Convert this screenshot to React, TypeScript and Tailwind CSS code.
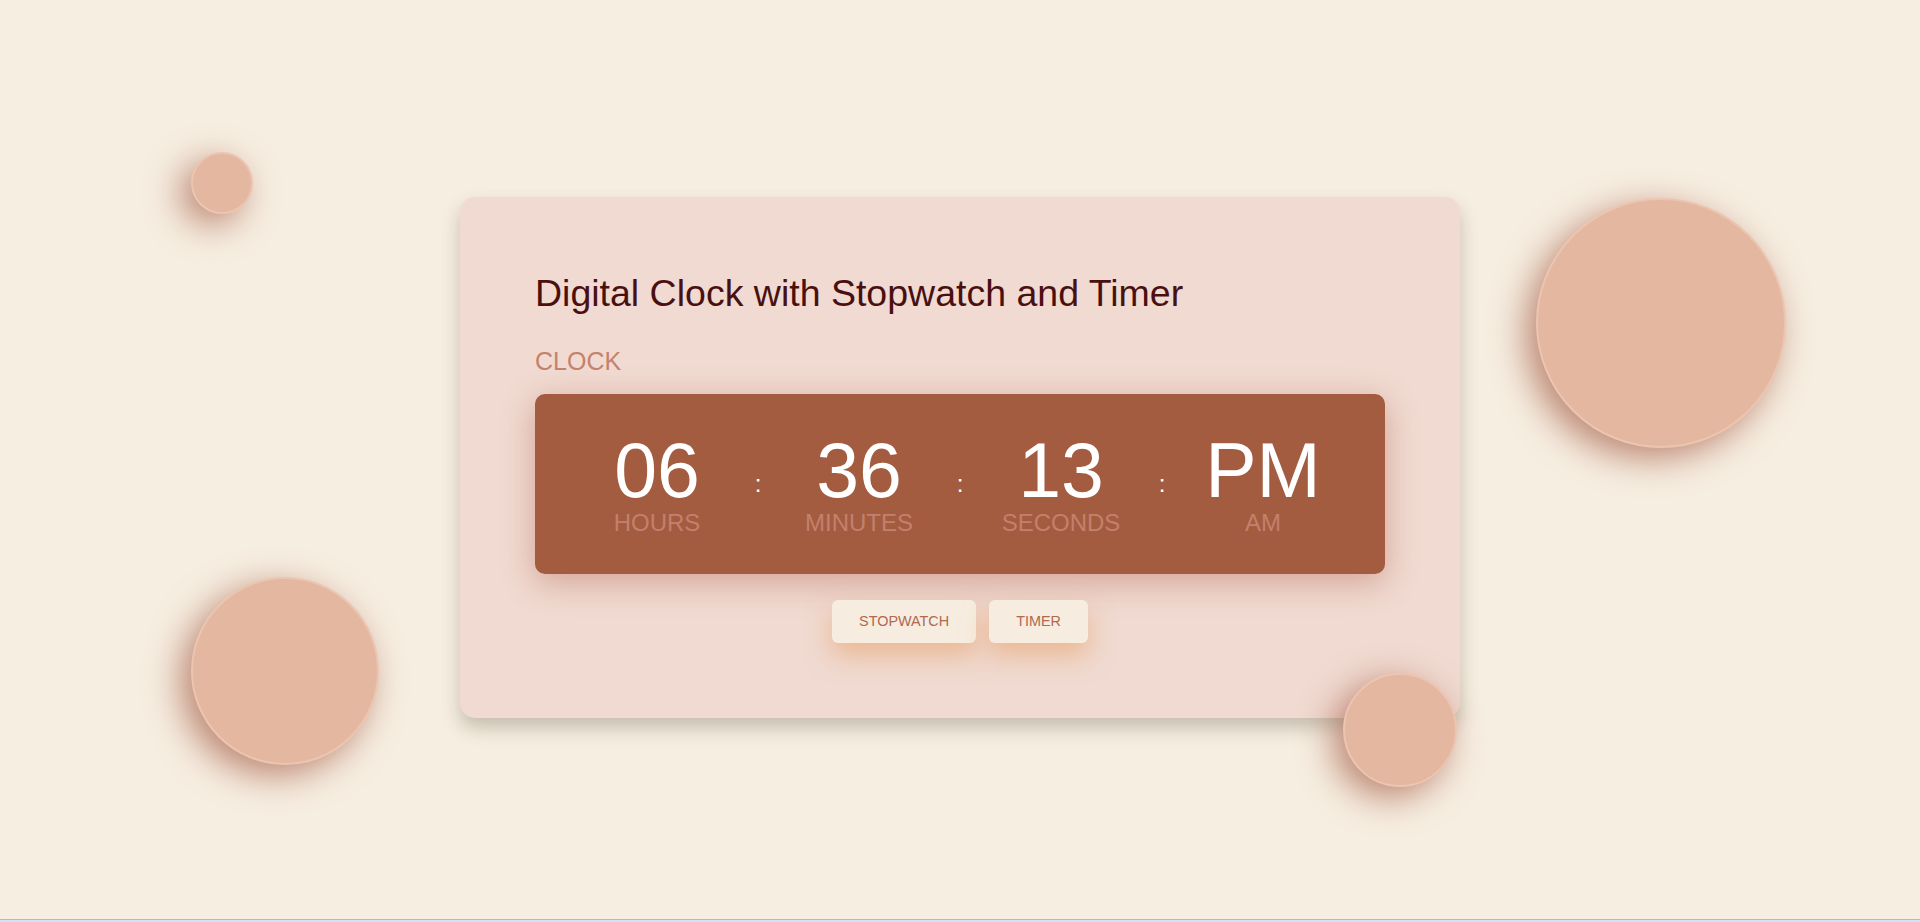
import React from "react";

const units = [
  { value: "06", label: "HOURS" },
  { value: "36", label: "MINUTES" },
  { value: "13", label: "SECONDS" },
  { value: "PM", label: "AM" },
];

function Bubble({ className }: { className: string }) {
  return (
    <div
      className={
        "absolute rounded-full bg-[#e4b7a0] border-2 border-[#ecc5b1] shadow-[-10px_10px_35px_rgba(150,65,40,0.6)] " +
        className
      }
    />
  );
}

export default function App() {
  return (
    <div className="relative min-h-[922px] bg-[#f6eee1] overflow-hidden font-['Liberation_Sans',Arial,sans-serif] leading-[1.15]">
      <div className="h-[919px] flex items-center justify-center pb-[4px]">
        <div className="w-[1000px] bg-[#f0dad1] rounded-[15px] p-[75px] shadow-[0_10px_18px_rgba(90,80,60,0.3)]">
          <h1 className="text-[37.5px] leading-[1.15] text-[#4a1010] mb-[32px]">Digital Clock with Stopwatch and Timer</h1>
          <div className="text-[25px] leading-[1.15] text-[#c4826c] mb-[18px]">CLOCK</div>

          <div className="h-[180px] rounded-[10px] bg-[#a35c40] flex items-center justify-center shadow-[0_8px_32px_rgba(170,80,60,0.4)]">
            {units.map((u, i) => (
              <React.Fragment key={u.label}>
                {i > 0 && (
                  <div className="w-[62px] text-center text-[24px] leading-[1.15] text-white">:</div>
                )}
                <div className="w-[140px] flex flex-col items-center">
                  <div className="text-[77px] leading-none text-white">{u.value}</div>
                  <div className="text-[24px] leading-[1.15] text-[#c3806c]">{u.label}</div>
                </div>
              </React.Fragment>
            ))}
          </div>

          <div className="mt-[26px] flex justify-center gap-[13px]">
            <button className="h-[43px] px-[27px] rounded-[6px] bg-[#f6ede0] text-[14.4px] text-[#b0684e] shadow-[0_12px_26px_rgba(230,155,95,0.55)]">
              STOPWATCH
            </button>
            <button className="h-[43px] px-[27px] rounded-[6px] bg-[#f6ede0] text-[14.4px] text-[#b0684e] shadow-[0_12px_26px_rgba(230,155,95,0.55)]">
              TIMER
            </button>
          </div>
        </div>
      </div>
      <div className="h-[1px] bg-[#b9b9b9]" />
      <div className="h-[2px] bg-[#d3e3f3]" />

      <Bubble className="left-[191px] top-[152px] w-[62px] h-[62px]" />
      <Bubble className="left-[1536px] top-[198px] w-[250px] h-[250px]" />
      <Bubble className="left-[191px] top-[577px] w-[188px] h-[188px]" />
      <Bubble className="left-[1343px] top-[673px] w-[114px] h-[114px]" />
    </div>
  );
}
